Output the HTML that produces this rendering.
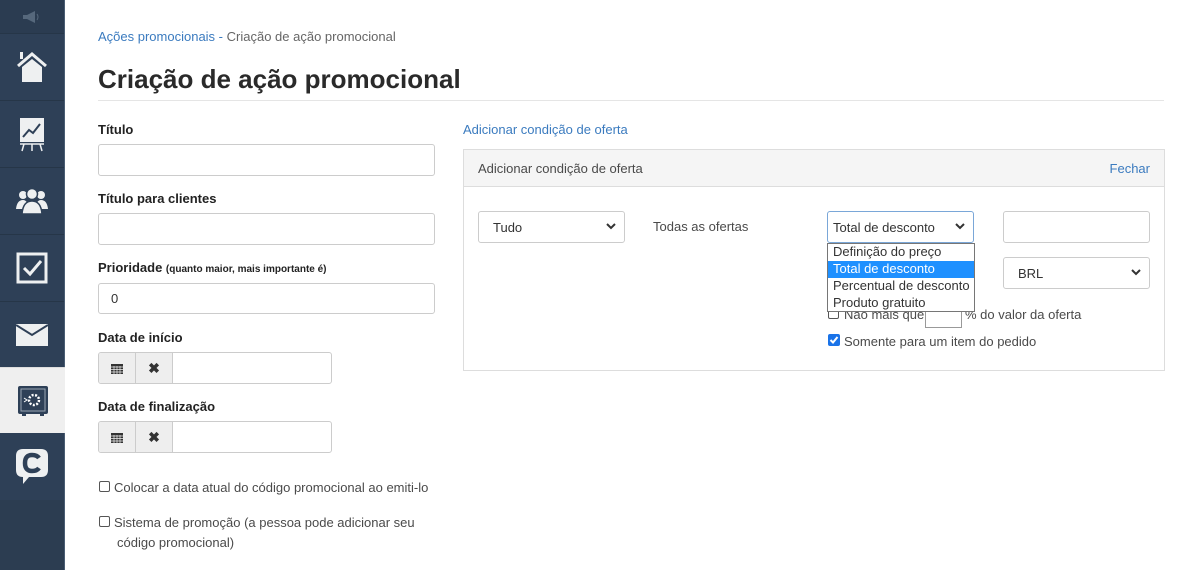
<!DOCTYPE html>
<html><head><meta charset="utf-8"><style>
*{box-sizing:border-box;margin:0;padding:0}
body{width:1200px;height:570px;overflow:hidden;background:#fff;font-family:"Liberation Sans",sans-serif;color:#333;position:relative;font-size:13px}
.sb{position:absolute;left:0;top:0;width:65px;height:570px;background:#2e4057;border-right:1px solid #4a5d73}
.it{position:absolute;left:0;width:64px;height:66px;border-top:1px solid #263648;display:flex;align-items:center;justify-content:center}
.a{position:absolute}
.lbl{position:absolute;font-weight:bold;font-size:13px;color:#222}
.inp{position:absolute;border:1px solid #ccc;border-radius:3px;background:#fff}
.sel{position:absolute;border:1px solid #ccc;border-radius:3px;background:#fff;font-size:13px;color:#333;padding-left:14px;display:flex;align-items:center}
.chev{position:absolute;right:8px;top:50%;margin-top:-4px}
.cb{position:absolute;width:11px;height:11px;border:1px solid #555;border-radius:2px;background:#fff}
.t{position:absolute;font-size:13px;color:#4a4a4a;white-space:nowrap}
</style></head><body>
<div class="sb">
 <div class="it" style="top:0;height:33px;border-top:none;background:#2b3c51">
  <svg width="20" height="12" viewBox="0 0 20 12"><rect x="1" y="4" width="4" height="4" fill="#56687c"/><path d="M5 4 L13 0 V12 L5 8Z" fill="#56687c"/><path d="M15 3 Q17 6 15 9" stroke="#56687c" fill="none"/></svg>
 </div>
 <div class="it" style="top:33px">
  <svg width="34" height="32" viewBox="0 0 34 32"><path d="M3 15 L17 3 L31 15" stroke="#eef0f1" stroke-width="3" fill="none"/><rect x="5" y="1" width="3" height="7" fill="#eef0f1"/><path d="M7 16 L17 8 L27 16 V31 H7Z" fill="#eef0f1"/></svg>
 </div>
 <div class="it" style="top:100px">
  <svg width="28" height="36" viewBox="0 0 28 36"><rect x="2" y="2" width="24" height="24" fill="#eef0f1"/><path d="M5 21 L11 14 L15 17 L22 8" stroke="#2e4057" stroke-width="2" fill="none"/><path d="M2 28 H26 M6 28 L4 35 M14 28 V35 M22 28 L24 35" stroke="#eef0f1" stroke-width="1.5"/></svg>
 </div>
 <div class="it" style="top:167px">
  <svg width="34" height="28" viewBox="0 0 34 28"><circle cx="8" cy="8" r="4" fill="#eef0f1"/><circle cx="26" cy="8" r="4" fill="#eef0f1"/><path d="M1 22 Q2 13 8 13 Q13 13 13 22Z" fill="#eef0f1"/><path d="M21 22 Q21 13 26 13 Q32 13 33 22Z" fill="#eef0f1"/><circle cx="17" cy="7" r="5.5" fill="#eef0f1" stroke="#2e4057" stroke-width="1.5"/><path d="M7 27 Q8 14 17 14 Q26 14 27 27Z" fill="#eef0f1" stroke="#2e4057" stroke-width="1.5"/></svg>
 </div>
 <div class="it" style="top:234px">
  <svg width="32" height="32" viewBox="0 0 32 32"><rect x="2" y="2" width="28" height="28" fill="none" stroke="#eef0f1" stroke-width="3"/><path d="M8 16 L14 22 L25 9" stroke="#eef0f1" stroke-width="3" fill="none"/></svg>
 </div>
 <div class="it" style="top:301px">
  <svg width="32" height="22" viewBox="0 0 32 22"><rect x="0" y="0" width="32" height="22" fill="#eef0f1"/><path d="M0 1 L16 11 L32 1" stroke="#2e4057" stroke-width="2" fill="none"/></svg>
 </div>
 <div class="it" style="top:367px;background:#efefef;border-top:1px solid #ddd;height:66px;width:65px">
  <svg width="32" height="32" viewBox="0 0 32 32"><rect x="1" y="1" width="30" height="28" rx="2" fill="#2e4057"/><rect x="4" y="4" width="24" height="22" fill="none" stroke="#9aa6b3" stroke-width="1"/><circle cx="17" cy="15" r="5" fill="none" stroke="#fff" stroke-width="2.5" stroke-dasharray="2 1.5"/><path d="M7 13 L10 15 L7 17" stroke="#fff" fill="none"/><rect x="5" y="29" width="4" height="2" fill="#2e4057"/><rect x="23" y="29" width="4" height="2" fill="#2e4057"/></svg>
 </div>
 <div class="it" style="top:433px;border-top:none">
  <svg width="34" height="38" viewBox="0 0 34 38"><path d="M8 2 H26 Q33 2 33 9 V23 Q33 30 26 30 H14 L8 37 V30 Q1 30 1 23 V9 Q1 2 8 2Z" fill="#eef0f1"/><path d="M24 11 Q22 8 17 8 Q10 8 10 16 Q10 24 17 24 Q22 24 24 21" stroke="#2e4057" stroke-width="4.5" fill="none"/></svg>
 </div>
 <div style="position:absolute;top:500px;left:0;width:64px;height:70px;background:#2c3d51"></div>
</div>

<div class="t" style="left:98px;top:29px;color:#3b7bbf">Ações promocionais - <span style="color:#666">Criação de ação promocional</span></div>
<div class="a" style="left:98px;top:64px;font-size:26px;font-weight:bold;color:#2a2a2a">Criação de ação promocional</div>
<div class="a" style="left:98px;top:100px;width:1066px;height:1px;background:#e5e5e5"></div>

<div class="lbl" style="left:98px;top:122px">Título</div>
<div class="inp" style="left:98px;top:144px;width:337px;height:32px"></div>
<div class="lbl" style="left:98px;top:191px">Título para clientes</div>
<div class="inp" style="left:98px;top:213px;width:337px;height:32px"></div>
<div class="lbl" style="left:98px;top:260px">Prioridade <span style="font-size:10px">(quanto maior, mais importante é)</span></div>
<div class="inp" style="left:98px;top:283px;width:337px;height:31px;padding:7px 12px;font-size:13px">0</div>
<div class="lbl" style="left:98px;top:330px">Data de início</div>
<div class="lbl" style="left:98px;top:399px">Data de finalização</div>

<div class="inp" style="left:98px;top:352px;width:234px;height:32px;overflow:hidden">
 <div style="position:absolute;left:0;top:0;width:37px;height:30px;background:#eee;border-right:1px solid #ccc;display:flex;align-items:center;justify-content:center"><svg width="12" height="11"><rect x="0" y="1" width="12" height="10" fill="#333"/><path d="M0 4H12M0 6.5H12M0 9H12M3 3V11M6 3V11M9 3V11" stroke="#eee" stroke-width=".7"/></svg></div>
 <div style="position:absolute;left:37px;top:0;width:37px;height:30px;background:#eee;border-right:1px solid #ccc;display:flex;align-items:center;justify-content:center;font-weight:bold;font-size:14px;color:#333">✖</div>
</div>
<div class="inp" style="left:98px;top:421px;width:234px;height:32px;overflow:hidden">
 <div style="position:absolute;left:0;top:0;width:37px;height:30px;background:#eee;border-right:1px solid #ccc;display:flex;align-items:center;justify-content:center"><svg width="12" height="11"><rect x="0" y="1" width="12" height="10" fill="#333"/><path d="M0 4H12M0 6.5H12M0 9H12M3 3V11M6 3V11M9 3V11" stroke="#eee" stroke-width=".7"/></svg></div>
 <div style="position:absolute;left:37px;top:0;width:37px;height:30px;background:#eee;border-right:1px solid #ccc;display:flex;align-items:center;justify-content:center;font-weight:bold;font-size:14px;color:#333">✖</div>
</div>

<div class="cb" style="left:99px;top:481px"></div>
<div class="t" style="left:114px;top:480px">Colocar a data atual do código promocional ao emiti-lo</div>
<div class="cb" style="left:99px;top:516px"></div>
<div class="t" style="left:114px;top:515px">Sistema de promoção (a pessoa pode adicionar seu</div>
<div class="t" style="left:117px;top:535px">código promocional)</div>

<div class="t" style="left:463px;top:122px;color:#3b7bbf">Adicionar condição de oferta</div>
<div class="a" style="left:463px;top:149px;width:702px;height:222px;border:1px solid #ddd;background:#fff">
 <div style="height:37px;background:#f5f5f5;border-bottom:1px solid #ddd;position:relative">
  <div class="t" style="left:14px;top:11px">Adicionar condição de oferta</div>
  <div class="t" style="right:14px;top:11px;color:#3b7bbf">Fechar</div>
 </div>
</div>
<div class="sel" style="left:478px;top:211px;width:147px;height:32px">Tudo<svg class="chev" width="10" height="7"><path d="M1 1L5 5L9 1" stroke="#333" stroke-width="2" fill="none"/></svg></div>
<div class="t" style="left:653px;top:219px">Todas as ofertas</div>
<div class="sel" style="left:827px;top:211px;width:147px;height:32px;padding-left:5px;border-color:#7aa7d8">Total de desconto<svg class="chev" width="10" height="7"><path d="M1 1L5 5L9 1" stroke="#333" stroke-width="2" fill="none"/></svg></div>
<div class="inp" style="left:1003px;top:211px;width:147px;height:32px"></div>
<div class="sel" style="left:1003px;top:257px;width:147px;height:32px">BRL<svg class="chev" width="10" height="7"><path d="M1 1L5 5L9 1" stroke="#333" stroke-width="2" fill="none"/></svg></div>

<div class="cb" style="left:828px;top:308px"></div>
<div class="t" style="left:844px;top:307px">Não mais que</div>
<div class="inp" style="left:925px;top:304px;width:37px;height:24px;border-radius:0;border-color:#999"></div>
<div class="t" style="left:965px;top:307px">% do valor da oferta</div>
<div class="a" style="left:828px;top:334px;width:12px;height:12px;background:#1a73e8;border-radius:2px"><svg width="12" height="12"><path d="M2.5 6L5 8.5L9.5 3" stroke="#fff" stroke-width="2" fill="none"/></svg></div>
<div class="t" style="left:844px;top:334px">Somente para um item do pedido</div>

<div class="a" style="left:827px;top:243px;width:148px;height:69px;border:1px solid #767676;background:#fff;font-size:13px;color:#333">
 <div style="height:17px;padding-left:5px;line-height:16px">Definição do preço</div>
 <div style="height:17px;padding-left:5px;line-height:16px;background:#1e90ff;color:#fff">Total de desconto</div>
 <div style="height:17px;padding-left:5px;line-height:16px">Percentual de desconto</div>
 <div style="height:16px;padding-left:5px;line-height:16px">Produto gratuito</div>
</div>
</body></html>
